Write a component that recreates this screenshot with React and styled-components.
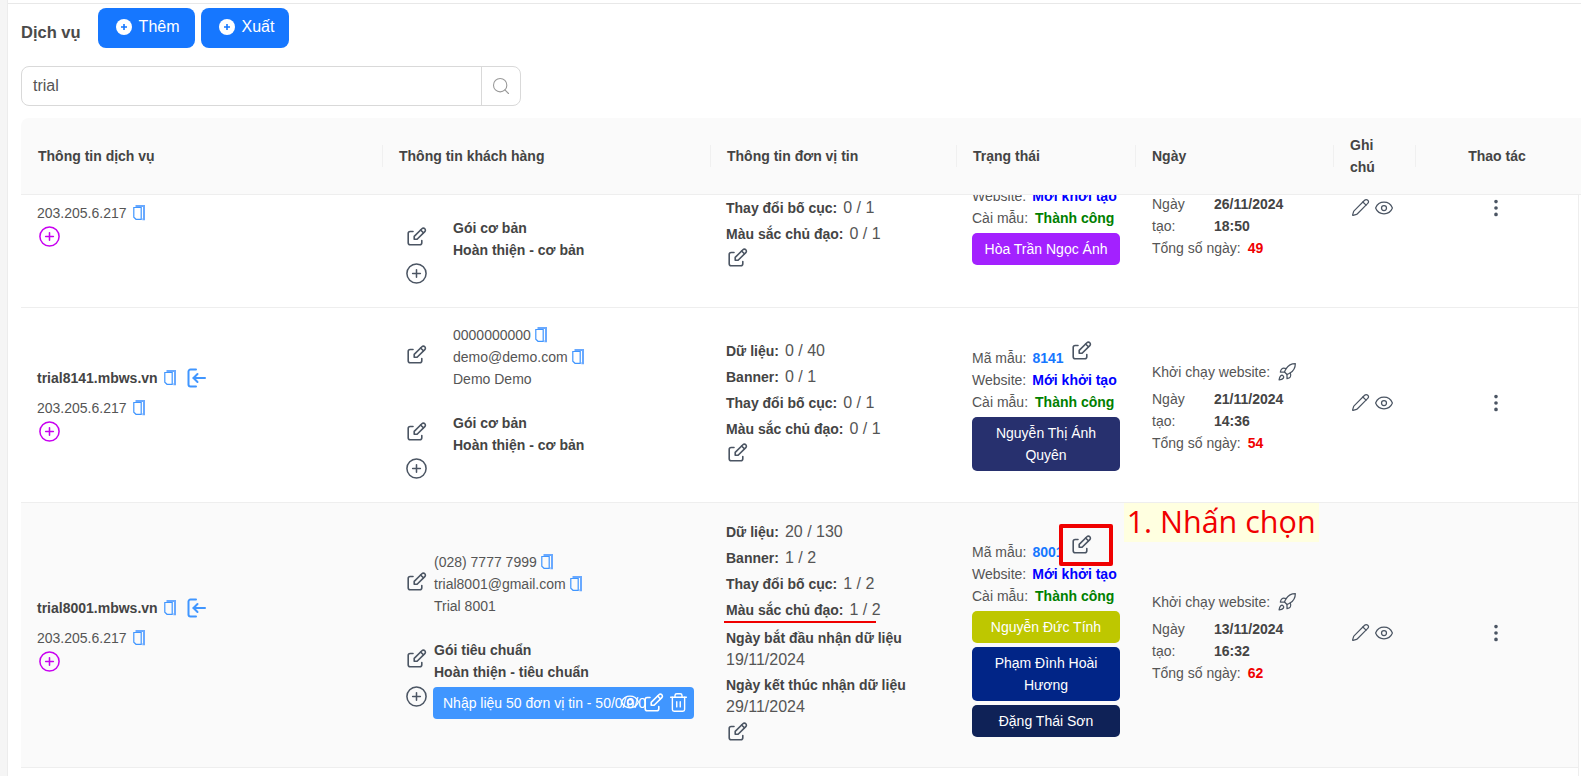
import React from "react"
import styled, { createGlobalStyle } from "styled-components"
import { CirclePlus, EllipsisVertical, Eye, Pencil, Rocket, Search, Trash2 } from "lucide-react"

const GlobalStyle = createGlobalStyle`
  html, body {
    margin: 0;
    padding: 0;
    background: #fff;
  }
  body {
    font-family: "Liberation Sans", Arial, sans-serif;
    font-size: 14px;
    line-height: 22px;
    color: #555;
  }
`

const COLUMNS = "361px 328px 246px 179px 198px 82px 1fr"

const Page = styled.div`
  display: flex;
  height: 776px;
  overflow: hidden;
`

const SideStrip = styled.div`
  width: 7px;
  flex: none;
  background: #f5f5f5;
  border-right: 1px solid #ececec;
`

const Main = styled.main`
  flex: 1;
  min-width: 0;
  margin-top: 3px;
  padding-left: 13px;
  border-top: 1px solid #e8e8e8;
`

const TitleBar = styled.div`
  display: flex;
  align-items: flex-start;
  gap: 6px;
  padding-top: 4px;
`

const Title = styled.h1`
  margin: 12px 11px 0 0;
  font-size: 16.5px;
  line-height: 24px;
  font-weight: 600;
  color: #4a4a4a;
`

const BlueButton = styled.button`
  display: flex;
  align-items: center;
  gap: 7px;
  height: 40px;
  padding: 0 15px 2px 18px;
  border: 0;
  border-radius: 8px;
  background: #1677ff;
  color: #fff;
  font: 16px "Liberation Sans", Arial, sans-serif;
`

const SearchBox = styled.div`
  display: flex;
  width: 500px;
  height: 40px;
  box-sizing: border-box;
  margin-top: 18px;
  border: 1px solid #d9d9d9;
  border-radius: 8px;
`

const SearchText = styled.div`
  flex: 1;
  padding: 0 11px;
  font-size: 16px;
  line-height: 37px;
  color: #555;
`

const SearchAddon = styled.div`
  display: flex;
  align-items: center;
  justify-content: center;
  width: 38px;
  border-left: 1px solid #d9d9d9;
  color: #999;
`

const Table = styled.section`
  margin-top: 12px;
`

const Head = styled.div`
  display: grid;
  grid-template-columns: ${COLUMNS};
  align-items: center;
  height: 76px;
  background: #fafafa;
  border-bottom: 1px solid #eee;
  border-radius: 8px 0 0 0;
`

const HeadCell = styled.div`
  position: relative;
  padding: 0 16px 0 17px;
  font-weight: 700;
  color: #444;
  text-align: ${({ $center }) => ($center ? "center" : "left")};
  padding-right: ${({ $center }) => ($center ? "19px" : "16px")};

  &:not(:first-child)::before {
    content: "";
    position: absolute;
    left: 0;
    top: 50%;
    height: 22px;
    margin-top: -11px;
    width: 1px;
    background: #f0f0f0;
  }
`

const Body = styled.div`
  height: 581px;
  overflow: hidden;
  border-right: 1px solid #eee;
  margin-right: 2px;
`

const Rows = styled.div`
  margin-top: -82px;
`

const Row = styled.div`
  display: grid;
  grid-template-columns: ${COLUMNS};
  align-items: center;
  height: ${({ $height }) => $height}px;
  box-sizing: border-box;
  border-bottom: 1px solid #eee;
  background: ${({ $active }) => ($active ? "#fafafa" : "#fff")};
`

const ServiceCell = styled.div`
  padding-left: 16px;
`

const Domain = styled.div`
  display: flex;
  align-items: center;
  height: 22px;
  margin-bottom: 8px;
  font-weight: 700;
  color: #444;
`

const IpLine = styled.div`
  display: flex;
  align-items: center;
  height: 22px;
`

const CustomerCell = styled.div`
  display: flex;
  flex-direction: column;
  padding-left: 25px;
`

const InfoBlock = styled.div`
  display: flex;
  align-items: center;
  gap: ${({ $gap }) => $gap}px;
  margin-bottom: 22px;

  &:nth-child(2) {
    margin-bottom: 0;
  }

  & > svg {
    margin-bottom: 7px;
  }
`

const Line = styled.div`
  display: flex;
  align-items: center;
  height: 22px;
  font-weight: ${({ $bold }) => ($bold ? 700 : 400)};
  color: ${({ $bold }) => ($bold ? "#444" : "#555")};
`

const AddRow = styled.div`
  display: flex;
  align-items: flex-start;
  gap: 7px;
  margin-top: ${({ $pill }) => ($pill ? 4 : 3)}px;
  min-height: ${({ $pill }) => ($pill ? 32 : 27)}px;

  & > svg {
    margin-top: ${({ $pill }) => ($pill ? 1 : 0)}px;
  }
`

const Pill = styled.div`
  position: relative;
  width: 261px;
  height: 32px;
  box-sizing: border-box;
  padding: 5px 10px;
  border-radius: 4px;
  background: #4096ff;
  color: #fff;
  white-space: nowrap;
`

const PillActions = styled.div`
  position: absolute;
  right: 5px;
  top: 5px;
  display: flex;
  gap: 4px;
`

const QuotaCell = styled.div`
  margin-bottom: 10px;
  padding-left: 16px;
`

const QuotaLine = styled.div`
  position: relative;
  display: flex;
  gap: 6px;
  height: 26px;
  align-items: center;
  font-weight: 700;
  color: #444;

  ${({ $marked }) =>
    $marked &&
    `&::after {
      content: "";
      position: absolute;
      left: -2px;
      top: 24px;
      width: 152px;
      height: 2px;
      background: #f00000;
    }`}
`

const QuotaValue = styled.span`
  font-size: 16px;
  font-weight: 400;
  color: #555;
`

const DateLabel = styled.div`
  margin-top: ${({ $first }) => ($first ? 4 : 3)}px;
  height: 22px;
  font-weight: 700;
  color: #444;
`

const DateValue = styled.div`
  height: 22px;
  font-size: 16px;
  color: #555;
`

const QuotaEdit = styled.div`
  display: flex;
  padding: ${({ $dated }) => ($dated ? "3px" : "0")} 0 0 2px;
`

const StatusCell = styled.div`
  padding-left: 16px;
`

const StatusLine = styled.div`
  display: flex;
  align-items: center;
  gap: ${({ $gap }) => $gap || 6}px;
  height: 22px;
  white-space: nowrap;
`

const TemplateLine = styled(StatusLine)`
  position: relative;
  align-items: flex-end;
  height: 29px;
  line-height: 22px;
`

const StatusValue = styled.b`
  color: ${({ $color }) => $color};
`

const EditSlot = styled.span`
  position: relative;
  display: flex;
  margin: 0 0 9px 2px;
  z-index: 1;

  & > svg {
    position: relative;
  }
`

const RedBox = styled.span`
  position: absolute;
  left: -13px;
  top: -10px;
  width: 54px;
  height: 42px;
  box-sizing: border-box;
  border: 4px solid #f00000;
  border-radius: 2px;
  background: #fafafa;
`

const NoteLabel = styled.span`
  position: absolute;
  left: 52px;
  top: -31px;
  padding: 0 3px;
  height: 39px;
  background: #ffffe0;
  color: #f00000;
  font-family: "Open Sans", sans-serif;
  font-size: 30.5px;
  line-height: 36px;
`

const People = styled.div`
  display: flex;
  flex-direction: column;
  gap: 4px;
  margin-top: 4px;
`

const Person = styled.div`
  width: 148px;
  box-sizing: border-box;
  padding: 5px 8px;
  border-radius: 5px;
  background: ${({ $color }) => $color};
  color: #fff;
  text-align: center;
`

const DateCell = styled.div`
  margin-top: 5px;
  padding-left: 17px;
`

const LaunchLine = styled.div`
  display: flex;
  align-items: center;
  gap: 7px;
  height: 22px;
  margin-bottom: 5px;
`

const CreatedGrid = styled.div`
  display: grid;
  grid-template-columns: 50px auto;
  column-gap: 12px;
  justify-content: start;
`

const CreatedValue = styled.div`
  font-weight: 700;
  color: #444;
`

const TotalLine = styled.div`
  display: flex;
  gap: 7px;
`

const TotalValue = styled.b`
  color: #f00000;
`

const NoteCell = styled.div`
  display: flex;
  gap: 4px;
  margin-bottom: 5px;
  padding-left: 18px;
  color: #4b5563;
`

const ActionCell = styled.div`
  display: flex;
  justify-content: center;
  margin-bottom: 5px;
  padding-right: 2px;
  color: #4b5563;
`

const CopyGlyph = styled.svg`
  flex: none;
  margin-left: ${({ $gap }) => $gap}px;
`

const LoginGlyph = styled.svg`
  flex: none;
  margin-left: 11px;
`

const EditIcon = ({ color = "#4b5563" }) => (
  <svg width="20" height="20" viewBox="0 0 20 20" fill="none" stroke={color} strokeWidth="1.6" strokeLinecap="round" strokeLinejoin="round" style={{ flex: "none" }}>
    <path d="M6 5.5H3.2A2 2 0 0 0 1.2 7.5v9.3a2 2 0 0 0 2 2h9.6a2 2 0 0 0 2-2V14.5" />
    <path d="M17.8 5.6a2 2 0 0 0-2.9-2.9L7.2 10.4v2.9h2.9z" />
    <path d="M13.6 4l2.8 2.8" />
  </svg>
)

const CopyIcon = ({ gap = 6 }) => (
  <CopyGlyph $gap={gap} width="12" height="16" viewBox="0 0 12 16" fill="none">
    <path d="M.8 2.5h7.4v11.8H5.2L3 14.3.8 12.3z" stroke="#4096ff" strokeWidth="1.2" />
    <path d="M2.5 1h8.5v13.3H9.4" stroke="#69a9ff" strokeWidth="2" />
  </CopyGlyph>
)

const LoginIcon = () => (
  <LoginGlyph width="19" height="20" viewBox="0 0 19 20" fill="none" stroke="#4096ff" strokeWidth="2" strokeLinecap="round" strokeLinejoin="round">
    <path d="M9 1.5H3.5a2 2 0 0 0-2 2v13a2 2 0 0 0 2 2H9" />
    <path d="M18 10H6.5" />
    <path d="M10.5 6l-4 4 4 4" />
  </LoginGlyph>
)

const ButtonPlus = () => (
  <svg width="16" height="16" viewBox="0 0 16 16" style={{ flex: "none" }}>
    <circle cx="8" cy="8" r="8" fill="#fff" />
    <path d="M8 5v6M5 8h6" stroke="#1677ff" strokeWidth="1.6" />
  </svg>
)

const AddCircle = () => <CirclePlus size={23} strokeWidth={1.6} color="#4b5563" style={{ flex: "none", margin: "-2px" }} />

const rows = [
  {
    height: 195,
    domain: "trial8150.mbws.vn",
    customer: ["0000000000", "demo@demo.com", "Demo Demo"],
    plan: ["Gói cơ bản", "Hoàn thiện - cơ bản"],
    gap: 26,
    quota: [["Dữ liệu:", "0 / 40"], ["Banner:", "0 / 1"], ["Thay đổi bố cục:", "0 / 1"], ["Màu sắc chủ đạo:", "0 / 1"]],
    template: "8150",
    people: [["Hòa Trần Ngọc Ánh", "#a321ff"]],
    created: ["26/11/2024", "18:50"],
    total: 49,
  },
  {
    height: 195,
    domain: "trial8141.mbws.vn",
    customer: ["0000000000", "demo@demo.com", "Demo Demo"],
    plan: ["Gói cơ bản", "Hoàn thiện - cơ bản"],
    gap: 26,
    quota: [["Dữ liệu:", "0 / 40"], ["Banner:", "0 / 1"], ["Thay đổi bố cục:", "0 / 1"], ["Màu sắc chủ đạo:", "0 / 1"]],
    template: "8141",
    people: [["Nguyễn Thị Ánh Quyên", "#27306e"]],
    created: ["21/11/2024", "14:36"],
    total: 54,
  },
  {
    height: 265,
    active: true,
    domain: "trial8001.mbws.vn",
    customer: ["(028) 7777 7999", "trial8001@gmail.com", "Trial 8001"],
    plan: ["Gói tiêu chuẩn", "Hoàn thiện - tiêu chuẩn"],
    gap: 7,
    pill: "Nhập liệu 50 đơn vị tin - 50/0/0/0",
    quota: [["Dữ liệu:", "20 / 130"], ["Banner:", "1 / 2"], ["Thay đổi bố cục:", "1 / 2"], ["Màu sắc chủ đạo:", "1 / 2"]],
    dates: ["19/11/2024", "29/11/2024"],
    template: "8001",
    marked: true,
    people: [["Nguyễn Đức Tính", "#bec700"], ["Phạm Đình Hoài Hương", "#012587"], ["Đặng Thái Sơn", "#0f2257"]],
    created: ["13/11/2024", "16:32"],
    total: 62,
  },
]

const ServiceRow = ({ row }) => (
  <Row $height={row.height} $active={row.active}>
    <ServiceCell>
      <Domain>
        {row.domain}
        <CopyIcon />
        <LoginIcon />
      </Domain>
      <IpLine>
        203.205.6.217
        <CopyIcon />
      </IpLine>
      <CirclePlus size={23} strokeWidth={1.6} color="#c800f0" style={{ display: "block", margin: "1px 0 0 1px" }} />
    </ServiceCell>

    <CustomerCell>
      <InfoBlock $gap={row.gap}>
        <EditIcon />
        <div>
          <Line>
            {row.customer[0]}
            <CopyIcon gap={4} />
          </Line>
          <Line>
            {row.customer[1]}
            <CopyIcon gap={4} />
          </Line>
          <Line>{row.customer[2]}</Line>
        </div>
      </InfoBlock>
      <InfoBlock $gap={row.gap}>
        <EditIcon />
        <div>
          <Line $bold>{row.plan[0]}</Line>
          <Line $bold>{row.plan[1]}</Line>
        </div>
      </InfoBlock>
      <AddRow $pill={!!row.pill}>
        <AddCircle />
        {row.pill && (
          <Pill>
            {row.pill}
            <PillActions>
              <Eye size={20} strokeWidth={1.6} />
              <EditIcon color="#fff" />
              <Trash2 size={21} strokeWidth={1.6} />
            </PillActions>
          </Pill>
        )}
      </AddRow>
    </CustomerCell>

    <QuotaCell>
      {row.quota.map(([label, value], i) => (
        <QuotaLine key={label} $marked={row.marked && i === 3}>
          {label}
          <QuotaValue>{value}</QuotaValue>
        </QuotaLine>
      ))}
      {row.dates && (
        <>
          <DateLabel $first>Ngày bắt đầu nhận dữ liệu</DateLabel>
          <DateValue>{row.dates[0]}</DateValue>
          <DateLabel>Ngày kết thúc nhận dữ liệu</DateLabel>
          <DateValue>{row.dates[1]}</DateValue>
        </>
      )}
      <QuotaEdit $dated={!!row.dates}>
        <EditIcon />
      </QuotaEdit>
    </QuotaCell>

    <StatusCell>
      <TemplateLine>
        Mã mẫu:
        <StatusValue $color="#1677ff">{row.template}</StatusValue>
        <EditSlot>
          {row.marked && <RedBox />}
          <EditIcon />
          {row.marked && <NoteLabel>1. Nhấn chọn</NoteLabel>}
        </EditSlot>
      </TemplateLine>
      <StatusLine>
        Website:
        <StatusValue $color="#0000ff">Mới khởi tạo</StatusValue>
      </StatusLine>
      <StatusLine $gap={7}>
        Cài mẫu:
        <StatusValue $color="#008000">Thành công</StatusValue>
      </StatusLine>
      <People>
        {row.people.map(([name, color]) => (
          <Person key={name} $color={color}>
            {name}
          </Person>
        ))}
      </People>
    </StatusCell>

    <DateCell>
      <LaunchLine>
        Khởi chạy website:
        <Rocket size={20} strokeWidth={1.5} color="#4b5563" />
      </LaunchLine>
      <CreatedGrid>
        <div>Ngày tạo:</div>
        <CreatedValue>
          {row.created[0]}
          <br />
          {row.created[1]}
        </CreatedValue>
      </CreatedGrid>
      <TotalLine>
        Tổng số ngày:
        <TotalValue>{row.total}</TotalValue>
      </TotalLine>
    </DateCell>

    <NoteCell>
      <Pencil size={19} strokeWidth={1.5} />
      <Eye size={20} strokeWidth={1.5} />
    </NoteCell>

    <ActionCell>
      <EllipsisVertical size={22} strokeWidth={2} />
    </ActionCell>
  </Row>
)

const App = () => (
  <Page>
    <GlobalStyle />
    <SideStrip />
    <Main>
      <TitleBar>
        <Title>Dịch vụ</Title>
        <BlueButton>
          <ButtonPlus />
          Thêm
        </BlueButton>
        <BlueButton>
          <ButtonPlus />
          Xuất
        </BlueButton>
      </TitleBar>
      <SearchBox>
        <SearchText>trial</SearchText>
        <SearchAddon>
          <Search size={20} strokeWidth={1.3} />
        </SearchAddon>
      </SearchBox>
      <Table>
        <Head>
          <HeadCell>Thông tin dịch vụ</HeadCell>
          <HeadCell>Thông tin khách hàng</HeadCell>
          <HeadCell>Thông tin đơn vị tin</HeadCell>
          <HeadCell>Trạng thái</HeadCell>
          <HeadCell>Ngày</HeadCell>
          <HeadCell>Ghi chú</HeadCell>
          <HeadCell $center>Thao tác</HeadCell>
        </Head>
        <Body>
          <Rows>
            {rows.map((row) => (
              <ServiceRow key={row.domain} row={row} />
            ))}
          </Rows>
        </Body>
      </Table>
    </Main>
  </Page>
)

export default App
